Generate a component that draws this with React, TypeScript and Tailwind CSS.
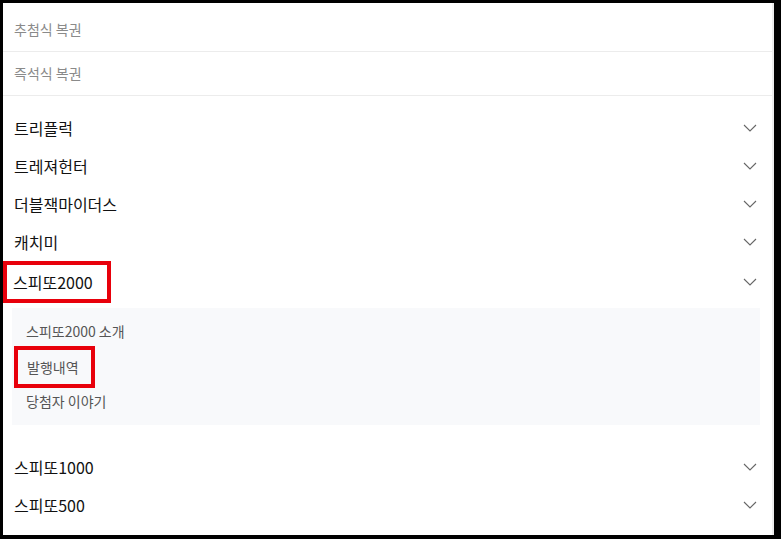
import React from "react";

const font = { fontFamily: '"Noto Sans CJK KR", "Noto Sans", sans-serif' };

const Chevron = () => (
  <svg width="14" height="8" viewBox="0 0 14 8" fill="none" className="shrink-0">
    <path d="M1 1l6 6 6-6" stroke="#666" strokeWidth="1.1" />
  </svg>
);

const MenuRow = ({ label }: { label: string }) => (
  <div className="flex items-center justify-between h-[38px] pl-[11px] pr-[15px]">
    <span className="text-[16px] text-[#111]">{label}</span>
    <Chevron />
  </div>
);

const App = () => {
  return (
    <div className="w-[781px] h-[539px] bg-black pl-[3px] pt-[3px] overflow-hidden" style={font}>
      <div className="w-[771px] h-[532px] bg-white border-r-2 border-[#ececec] flex flex-col">
        <div className="h-[49px] flex items-center pt-[5px] pl-[11px] text-[14px] text-[#8a8a8a] border-b border-[#ececec]">
          추첨식 복권
        </div>
        <div className="h-[44px] flex items-center pl-[11px] text-[14px] text-[#8a8a8a] border-b border-[#ececec]">
          즉석식 복권
        </div>
        <div className="pt-[13px]">
          <MenuRow label="트리플럭" />
          <MenuRow label="트레져헌터" />
          <MenuRow label="더블잭마이더스" />
          <MenuRow label="캐치미" />
          <div className="h-[42px] flex items-center justify-between pr-[15px]">
            <span className="pl-[6px] pr-[14px] py-[6px] border-4 border-[#e8000b] text-[16px] text-[#111] leading-[22px]">
              스피또2000
            </span>
            <Chevron />
          </div>
        </div>
        <div className="mt-[5px] ml-[9px] mr-[12px] h-[117px] bg-[#f8f9fb] flex flex-col pt-[6px] pl-[14px]">
          <div className="h-[35px] flex items-center text-[14px] text-[#555]">스피또2000 소개</div>
          <div className="h-[35px] flex items-center">
            <span className="-ml-[12px] pl-[9px] pr-[12px] py-[7px] border-4 border-[#e8000b] text-[14px] text-[#555] leading-[20px]">
              발행내역
            </span>
          </div>
          <div className="h-[35px] flex items-center text-[14px] text-[#555]">당첨자 이야기</div>
        </div>
        <div className="pt-[23px]">
          <MenuRow label="스피또1000" />
          <MenuRow label="스피또500" />
        </div>
      </div>
    </div>
  );
};

export default App;
